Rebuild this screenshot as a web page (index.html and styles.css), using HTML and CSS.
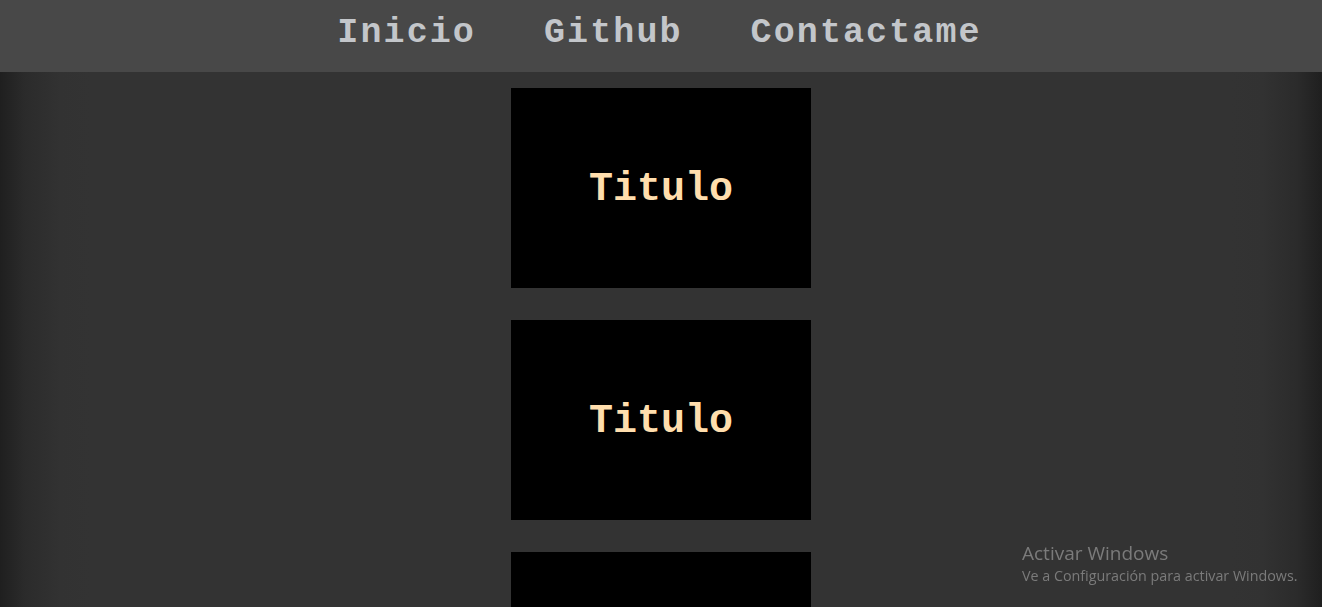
FILE: index.html
```html
<!DOCTYPE html>
<html lang="es">
<head>
<meta charset="utf-8">
<title>Portafolio</title>
<link rel="stylesheet" href="styles.css">
</head>
<body>
<header class="topbar">
  <nav class="nav">
    <a class="nav-link" href="#">Inicio</a>
    <a class="nav-link" href="#">Github</a>
    <a class="nav-link" href="#">Contactame</a>
  </nav>
</header>
<main class="cards">
  <section class="card"><h2 class="card-title">Titulo</h2></section>
  <section class="card"><h2 class="card-title">Titulo</h2></section>
  <section class="card"><h2 class="card-title">Titulo</h2></section>
</main>
<div class="watermark">
  <div class="wm-title">Activar Windows</div>
  <div class="wm-sub">Ve a Configuración para activar Windows.</div>
</div>
</body>
</html>
```
FILE: styles.css
```css
html {
  scrollbar-width: none;
}
html::-webkit-scrollbar {
  display: none;
}
body {
  margin: 0;
  min-height: 100vh;
  background: linear-gradient(to right, #1f1f1f 0px, #2b2b2b 25px, #323232 60px, #333333 90px, #333333 calc(100% - 90px), #323232 calc(100% - 60px), #2b2b2b calc(100% - 25px), #1f1f1f 100%);
  background-attachment: fixed;
  font-family: "Liberation Mono", "Courier New", monospace;
}
.topbar {
  height: 72px;
  background: #484848;
  display: flex;
  justify-content: center;
  align-items: flex-start;
}
.nav {
  display: flex;
  gap: 68px;
  padding-top: 14px;
  padding-right: 3px;
}
.nav-link {
  color: #c3c6ca;
  text-decoration: none;
  font-weight: bold;
  font-size: 35px;
  letter-spacing: 2.1px;
  line-height: 38px;
}
.cards {
  display: flex;
  flex-direction: column;
  align-items: center;
  gap: 32px;
  padding-top: 16px;
}
.card {
  width: 300px;
  height: 200px;
  background: #000;
  display: flex;
  align-items: center;
  justify-content: center;
  flex-shrink: 0;
}
.card-title {
  margin: 4px 0 0;
  color: #ffdead;
  font-size: 40px;
  font-weight: bold;
  line-height: 1;
}
.watermark {
  position: fixed;
  left: 1022px;
  top: 541px;
  font-family: "Open Sans", "Noto Sans", sans-serif;
  color: #7b7b7b;
}
.wm-title {
  font-size: 19px;
  line-height: 25px;
}
.wm-sub {
  font-size: 14.3px;
  line-height: 20px;
}
```
